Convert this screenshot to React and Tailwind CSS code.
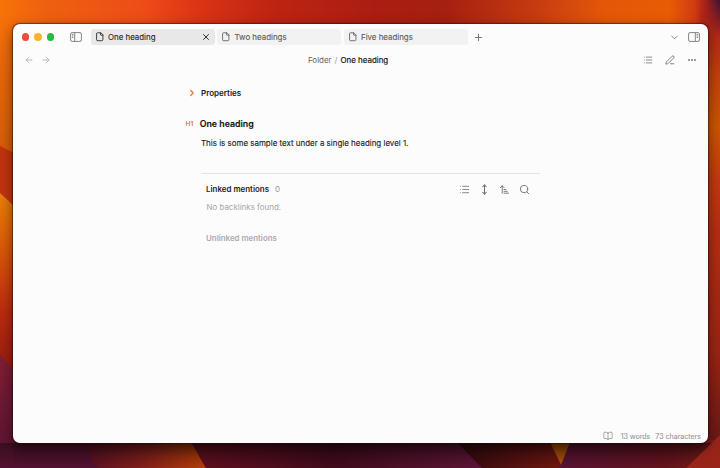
import React from "react";
import { ChevronDown, ChevronRight, Plus, X, File, ArrowLeft, ArrowRight, List, MoveVertical, ArrowUpNarrowWide, Search, BookOpen, Ellipsis, PenLine } from "lucide-react";

function Wallpaper() {
  return (
    <svg className="absolute inset-0 h-[468px] w-[720px]" viewBox="0 0 720 468" preserveAspectRatio="none">
      <defs>
        <linearGradient id="top" x1="0" x2="1" y1="0" y2="0">
          <stop offset="0" stopColor="#f77308" />
          <stop offset="0.06" stopColor="#ee6110" />
          <stop offset="0.2" stopColor="#ed4c17" />
          <stop offset="0.28" stopColor="#d93315" />
          <stop offset="0.38" stopColor="#bd2412" />
          <stop offset="0.52" stopColor="#ab1d12" />
          <stop offset="0.62" stopColor="#a52010" />
          <stop offset="0.74" stopColor="#c53a10" />
          <stop offset="0.84" stopColor="#e35808" />
          <stop offset="0.93" stopColor="#e75c04" />
          <stop offset="0.965" stopColor="#d23b12" />
          <stop offset="0.98" stopColor="#a42019" />
          <stop offset="1" stopColor="#3b1235" />
        </linearGradient>
        <linearGradient id="left1" x1="0" x2="0" y1="0" y2="1">
          <stop offset="0" stopColor="#f06b0a" stopOpacity="0" />
          <stop offset="0.3" stopColor="#ec690a" />
          <stop offset="1" stopColor="#d55d08" />
        </linearGradient>
        <linearGradient id="left2" x1="0" x2="0" y1="0" y2="1">
          <stop offset="0" stopColor="#e98007" />
          <stop offset="0.3" stopColor="#dc5909" />
          <stop offset="0.65" stopColor="#bd2b0f" />
          <stop offset="1" stopColor="#901b0f" />
        </linearGradient>
        <linearGradient id="left3" x1="0" x2="0" y1="0" y2="1">
          <stop offset="0" stopColor="#811e35" />
          <stop offset="1" stopColor="#551231" />
        </linearGradient>
        <linearGradient id="right" x1="0" x2="0" y1="0" y2="1">
          <stop offset="0" stopColor="#a82418" stopOpacity="0" />
          <stop offset="0.08" stopColor="#b52a14" />
          <stop offset="0.16" stopColor="#c3400c" />
          <stop offset="0.27" stopColor="#cd5602" />
          <stop offset="0.38" stopColor="#c53a0e" />
          <stop offset="0.5" stopColor="#b72d12" />
          <stop offset="0.75" stopColor="#9b2513" />
          <stop offset="1" stopColor="#5d1418" />
        </linearGradient>
        <linearGradient id="ember" x1="0" x2="1" y1="0" y2="0">
          <stop offset="0" stopColor="#581025" />
          <stop offset="0.5" stopColor="#87201b" />
          <stop offset="1" stopColor="#bd4108" />
        </linearGradient>
        <linearGradient id="wine" x1="0" x2="1" y1="0" y2="0">
          <stop offset="0" stopColor="#64101e" />
          <stop offset="0.5" stopColor="#430b1d" />
          <stop offset="1" stopColor="#601638" />
        </linearGradient>
        <linearGradient id="bronze" x1="0" x2="1" y1="0" y2="0">
          <stop offset="0" stopColor="#330a10" />
          <stop offset="1" stopColor="#74180f" />
        </linearGradient>
        <linearGradient id="plum" x1="0" x2="1" y1="0" y2="0">
          <stop offset="0" stopColor="#5b1436" />
          <stop offset="0.7" stopColor="#68141d" />
          <stop offset="1" stopColor="#811c18" />
        </linearGradient>
        <linearGradient id="shade" x1="0" x2="0" y1="0" y2="1">
          <stop offset="0" stopColor="#080305" stopOpacity="0.4" />
          <stop offset="1" stopColor="#080305" stopOpacity="0.04" />
        </linearGradient>
      </defs>
      <rect width="720" height="60" fill="url(#top)" />
      <rect y="14" width="30" height="140" fill="url(#left1)" />
      <path d="M0 146 L14 153 V210 L0 194Z" fill="#c3340f" />
      <path d="M0 193 L14 206 V376 H0Z" fill="url(#left2)" />
      <path d="M0 354 L14 371 V400 H30 V468 H0Z" fill="url(#left3)" />
      <rect x="700" width="20" height="468" fill="url(#right)" />
      <rect x="30" y="436" width="670" height="32" fill="#4b0e24" />
      <path d="M14 440 H80 L99 468 H14Z" fill="#551231" />
      <path d="M80 440 H190 L206 468 H97Z" fill="url(#ember)" />
      <path d="M190 440 H455 L482 468 H206Z" fill="url(#wine)" />
      <path d="M455 440 H550 L562 468 H482Z" fill="url(#bronze)" />
      <path d="M572 440 H715 V468 H559Z" fill="url(#plum)" />
      <path d="M549 440 H571 L561 465Z" fill="#b55608" />
      <rect y="443" width="720" height="25" fill="url(#shade)" />
      <path d="M686 468 L720 435 V468Z" fill="#99251a" />
    </svg>
  );
}

function Sidebar({ right = false }) {
  return (
    <svg className="h-[10px] w-[12px] shrink-0" viewBox="0 0 12 10" fill="none" stroke="#777" strokeWidth="0.9">
      <rect x="0.6" y="0.6" width="10.8" height="8.8" rx="1.4" />
      {right ? <path d="M7.3 .6v8.8M8.6 2.4h1.5M8.6 3.9h1.5M8.6 5.4h1.5" /> : <path d="M4.7 .6v8.8M1.9 2.4h1.5M1.9 3.9h1.5M1.9 5.4h1.5" />}
    </svg>
  );
}

function Tab({ name, active = false }) {
  return (
    <div className={active ? "flex h-4 w-[124px] items-center rounded-[3px] bg-[#e8e8e8] pl-1 pr-1 text-[#282828]" : "flex h-4 w-[124px] items-center rounded-[3px] bg-[#f2f2f2] pl-1 pr-1 text-[#606060]"}>
      <File size={9.5} strokeWidth={2.2} className="shrink-0" />
      <span className="ml-[4px] flex-1 text-[7.9px] leading-4 [-webkit-text-stroke:0.12px]">{name}</span>
      {active && <X size={10} strokeWidth={2.3} />}
    </div>
  );
}

export default function App() {
  return (
    <div className="relative h-[468px] w-[720px] overflow-hidden font-[Inter,sans-serif] text-[#222]">
      <Wallpaper />
      <div className="relative pl-[12.5px] pt-6">
        <main className="flex h-[419px] w-[695.5px] flex-col overflow-hidden rounded-[7px] bg-[#fcfcfc] shadow-[0_0_1px_0.5px_rgba(40,10,10,0.5),0_5px_14px_rgba(0,0,0,0.5)]">
          <header className="flex h-[26px] shrink-0 items-center pl-[9px] pr-[8.5px] text-[#777]">
            <div className="flex gap-[5px]">
              <i className="size-[7.5px] rounded-full bg-[#ee4d38]" />
              <i className="size-[7.5px] rounded-full bg-[#f7b32b]" />
              <i className="size-[7.5px] rounded-full bg-[#27bd3c]" />
            </div>
            <div className="ml-4 flex"><Sidebar /></div>
            <div className="ml-[8.5px] flex gap-[2.5px]">
              <Tab name="One heading" active />
              <Tab name="Two headings" />
              <Tab name="Five headings" />
            </div>
            <Plus size={11} strokeWidth={2.1} className="ml-[5.2px]" />
            <ChevronDown size={11} strokeWidth={2} className="ml-auto mr-[8px]" />
            <Sidebar right />
          </header>
          <nav className="flex h-[20px] shrink-0 items-center pl-[11px] pr-[11px] text-[#777]">
            <div className="flex w-[284.5px] gap-[7.5px] text-[#b5b5b5]">
              <ArrowLeft size={10} strokeWidth={2.2} />
              <ArrowRight size={10} strokeWidth={2.2} />
            </div>
            <div className="flex gap-[3px] text-[7.95px] leading-3">
              <span className="text-[#666]">Folder</span>
              <span className="text-[#999]">/</span>
              <span className="text-[#222] [-webkit-text-stroke:0.2px]">One heading</span>
            </div>
            <div className="ml-auto flex gap-[12px]">
              <List size={10} strokeWidth={2} />
              <PenLine size={10} strokeWidth={2.2} />
              <Ellipsis size={10} strokeWidth={3} />
            </div>
          </nav>
          <article className="ml-[173px] w-[354px]">
            <div className="mt-[17px] flex h-3 items-center">
              <ChevronRight size={10} strokeWidth={3} className="ml-[1px] text-[#e87542]" />
              <span className="ml-[4.5px] text-[8px] font-semibold">Properties</span>
            </div>
            <div className="mt-[18px] flex h-[14px] items-center">
              <span className="w-[14.2px] pt-[1px] text-[6.6px] font-bold leading-[13px] text-[#ef8350]">H1</span>
              <h1 className="text-[8.8px] font-semibold text-[#161616] [-webkit-text-stroke:0.15px]">One heading</h1>
            </div>
            <p className="ml-[15.5px] mt-[6px] text-[7.95px] leading-3 [-webkit-text-stroke:0.12px]">This is some sample text under a single heading level 1.</p>
            <section className="ml-[15px] mt-[24px] border-t border-[#e3e3e3] pl-[5.5px]">
              <div className="mt-[9px] flex h-3 items-center">
                <h2 className="text-[7.95px] font-semibold leading-3">Linked mentions</h2>
                <span className="ml-[6px] text-[8px] leading-3 text-[#999]">0</span>
                <div className="ml-auto mr-[10px] flex gap-[9px] text-[#707070]">
                  <List size={11} strokeWidth={1.8} />
                  <MoveVertical size={11} strokeWidth={2.2} />
                  <ArrowUpNarrowWide size={11} strokeWidth={2} />
                  <Search size={11} strokeWidth={2} />
                </div>
              </div>
              <p className="ml-[0.5px] mt-[6px] text-[7.95px] leading-3 text-[#a6a6a6]">No backlinks found.</p>
              <h2 className="mt-[19px] text-[7.9px] font-semibold leading-3 text-[#ababab]">Unlinked mentions</h2>
            </section>
          </article>
          <footer className="mt-auto flex h-[15px] shrink-0 items-center justify-end pr-[7px] text-[7.05px] leading-[13px] text-[#999]">
            <BookOpen size={10} strokeWidth={2} />
            <span className="ml-[8px] pt-[1px] [-webkit-text-stroke:0.1px]">13 words</span>
            <span className="ml-[5px] pt-[1px] [-webkit-text-stroke:0.1px]">73 characters</span>
          </footer>
        </main>
      </div>
    </div>
  );
}
